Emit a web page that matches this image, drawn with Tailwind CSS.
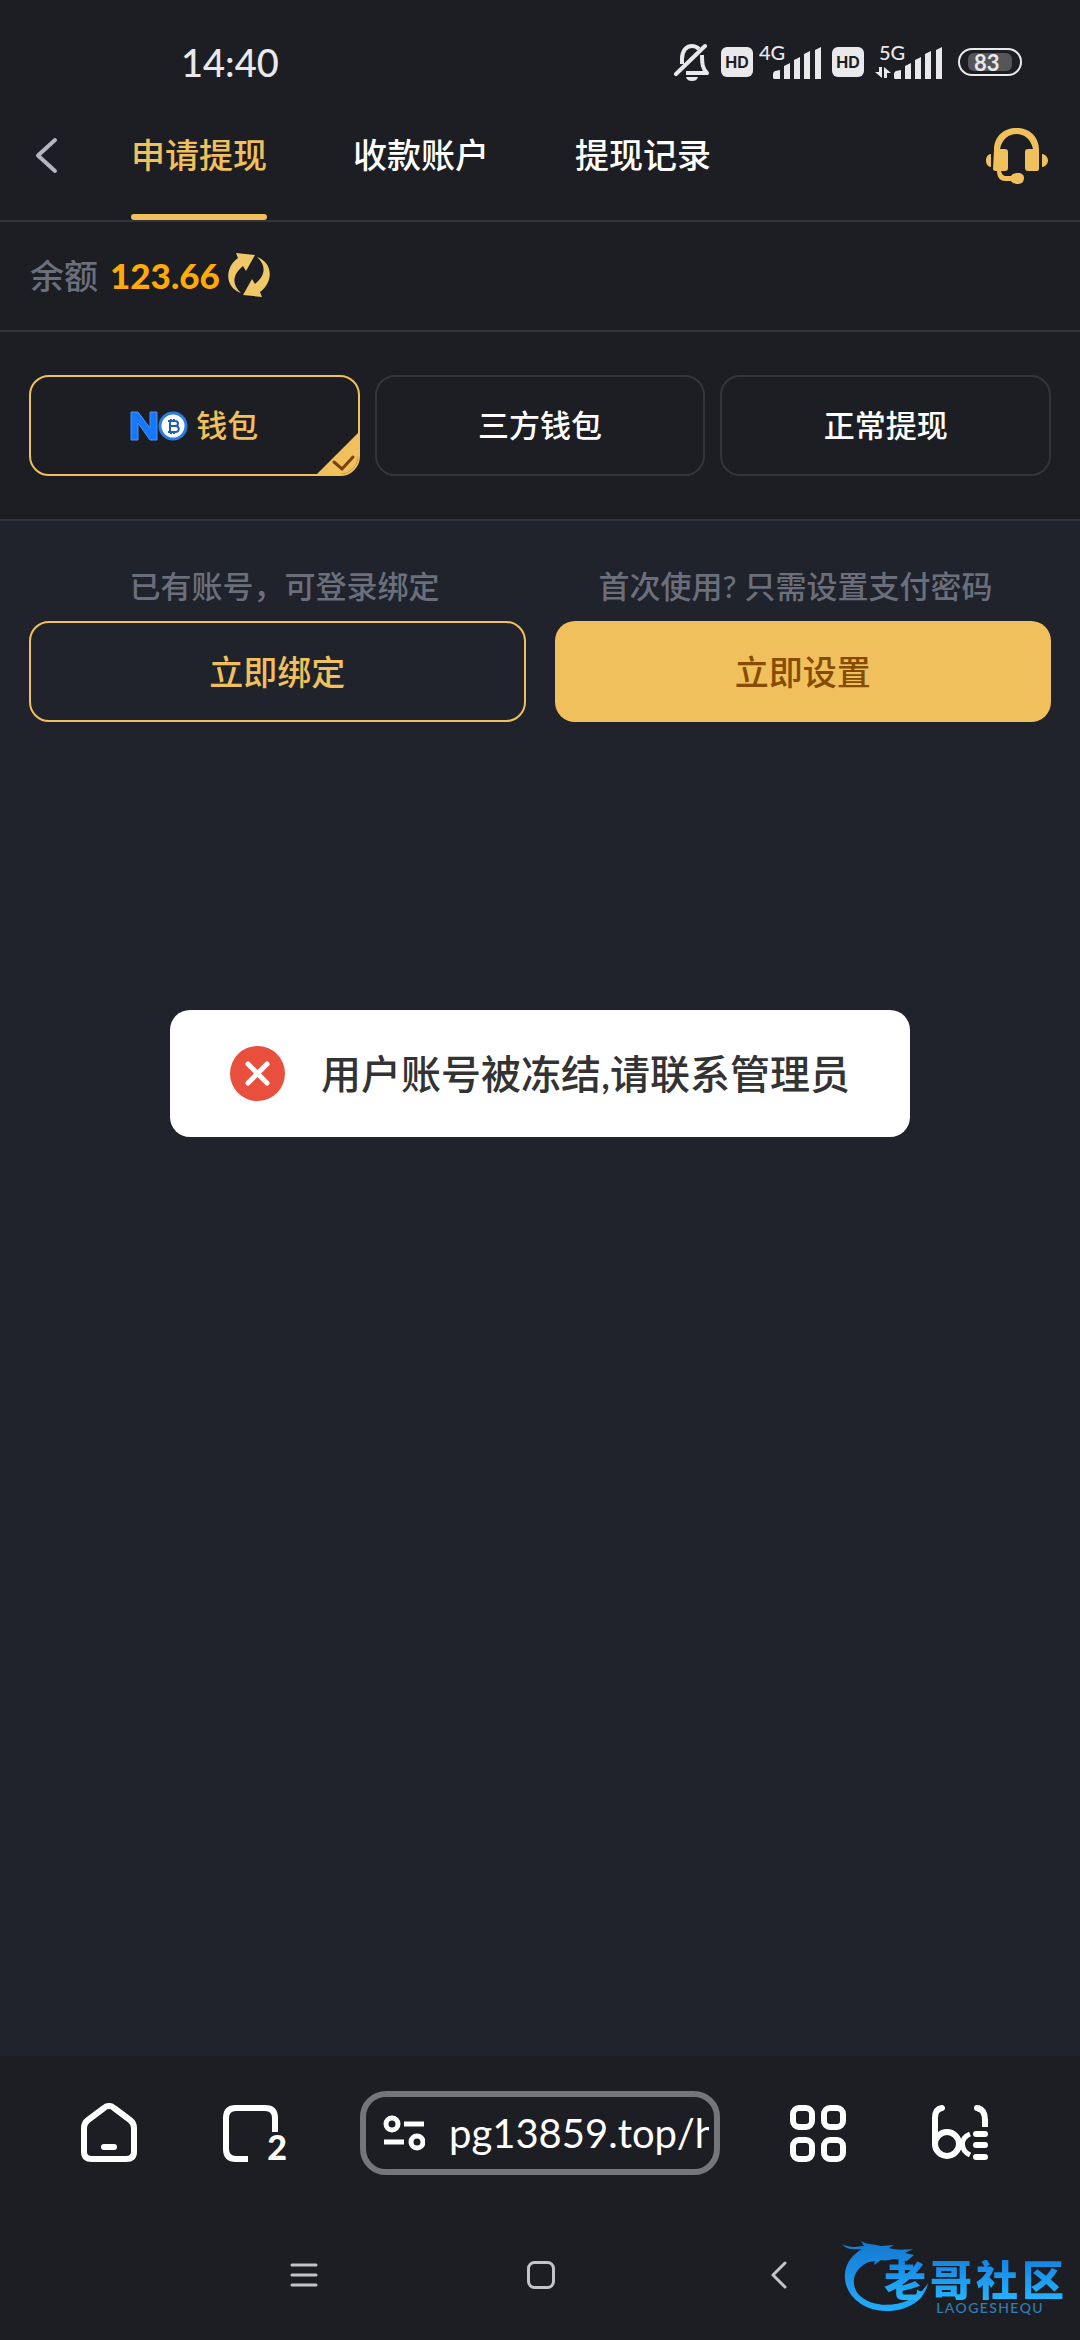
<!DOCTYPE html>
<html lang="zh-CN">
<head>
<meta charset="utf-8">
<meta name="viewport" content="width=device-width, initial-scale=1">
<title>申请提现</title>
<script src="https://cdn.jsdelivr.net/npm/@tailwindcss/browser@4"></script>
</head>
<body class="flex min-h-screen flex-col bg-[#20232b] font-['Lato','Noto_Sans_CJK_SC',sans-serif] font-medium text-white">

<!-- Status bar -->
<div class="flex h-[91px] shrink-0 items-start justify-between bg-[#1d1e23] pr-[58px] pl-[181px] pt-[38px]">
  <time class="text-[38px] leading-[48px] text-[#e9e9ec]">14:40</time>
  <div class="flex h-12 items-center text-[#e9e9ec]">
    <svg class="h-10 w-9" viewBox="0 0 36 40" fill="none" stroke="currentColor" stroke-width="4" role="img" aria-label="静音">
      <path d="M8 22V17C8 9 12 4 18 4c3 0 5 1 7 3M28 13c0 10 1 14 5 18H12" stroke-linejoin="round"/>
      <path d="M2 32 31 4" stroke-linecap="round"/>
      <path d="M12 35h12c-1 3-3 4-6 4s-5-1-6-4Z" fill="currentColor" stroke="none"/>
    </svg>
    <span class="ml-[11px] flex h-[30px] w-8 items-center justify-center rounded-md bg-[#e9e9ec] font-['Inter'] text-base font-bold text-[#1d1e23]">HD</span>
    <div class="relative ml-5 h-9 w-12">
      <span class="absolute -top-1 -left-3.5 text-xl leading-6">4G</span>
      <svg class="h-9 w-12" viewBox="0 0 48 36" fill="currentColor"><path d="M0 34v-4q0-2 2-3l5-1v9H1zM11 22l6-3v16h-6zM21 16l6-3v22h-6zM31 10l6-3v28h-6zM42 6l6-3v32h-6z"/></svg>
    </div>
    <span class="ml-[11px] flex h-[30px] w-8 items-center justify-center rounded-md bg-[#e9e9ec] font-['Inter'] text-base font-bold text-[#1d1e23]">HD</span>
    <div class="relative ml-[11px] h-9 w-[67px]">
      <span class="absolute -top-1 left-1 text-xl leading-6">5G</span>
      <svg class="h-9 w-[67px]" viewBox="0 0 67 36" fill="currentColor"><path d="M19 34v-4q0-2 2-3l5-1v9h-6zM30 22l6-3v16h-6zM40 16l6-3v22h-6zM50 10l6-3v28h-6zM61 6l6-3v32h-6z"/><path d="M4 23h3v11L0 28h4zM9 34V23l7 6h-4v5z"/></svg>
    </div>
    <span class="ml-4 flex h-7 w-16 items-center justify-center rounded-full border-2 border-[#e9e9ec]"><span class="flex h-[18px] w-11 items-center rounded-md bg-[#55565a] pl-1.5 text-[22px] font-bold">83</span></span>
  </div>
</div>

<div class="relative flex flex-1 flex-col">
  <header class="flex h-[131px] items-stretch border-b-2 border-[#34353b] bg-[#1d1e23] pr-[31px] pl-8">
    <button type="button" aria-label="返回" class="mr-[69px] text-[#b4b6c0]">
      <svg class="h-10 w-[30px]" viewBox="0 0 30 40" fill="none" stroke="currentColor" stroke-width="4" stroke-linecap="round" stroke-linejoin="round"><path d="M23 4 6 19.500 23 35"/></svg>
    </button>
    <nav class="flex gap-[86px] text-[34px]">
      <a href="#" aria-current="page" class="relative flex items-center pb-0.5 text-[#efc05b]">申请提现<span class="absolute inset-x-0 bottom-0 h-1.5 rounded-full bg-[#efc05b]"></span></a>
      <a href="#" class="flex items-center pb-0.5">收款账户</a>
      <a href="#" class="flex items-center pb-0.5">提现记录</a>
    </nav>
    <button type="button" aria-label="客服" class="ml-auto text-[#efc05b]">
      <svg class="h-14 w-16" viewBox="0 0 64 56" fill="currentColor">
        <path d="M9 22C9 8 19 0 31.500 0S54 8 54 22v19q0 2-2 2H43q-3 0-3-3V24q0-3 3-3h5C46 11 39 6 31.500 6S17 11 15 21h5q3 0 3 3v16q0 3-3 3h-4c1 4 3 5 5 5h5c2-3 5-3 7-3 4 0 6 2 6 5s-2 6-6 6c-2 0-5 0-7-3h-6c-5 0-8-4-8-10q-4 0-4-2z"/>
        <path d="M6 26v13C3 39 1 36 1 32.500S3 26 6 26ZM57 26v13c3 0 6-3 6-6.500S60 26 57 26Z"/>
      </svg>
    </button>
  </header>

  <section class="flex h-[110px] items-center border-b-2 border-[#34353b] bg-[#1d1e23] px-[30px] pb-0.5">
    <span class="text-[34px] text-[#6b6f7b]">余额</span>
    <strong class="ml-3 text-[35px] font-black text-[#ffaa09]">123.66</strong>
    <button type="button" aria-label="刷新余额" class="ml-2 text-[#efc868]">
      <svg class="h-11 w-[42px]" viewBox="0 0 42 44" fill="currentColor">
        <path id="arrow" d="M8 0 27 2 18 18 15 13C5 21 3 31 13 40-4 34-3 14 10 5Z"/>
        <use href="#arrow" transform="rotate(180 21 22)"/>
      </svg>
    </button>
  </section>

  <section class="border-b-2 border-[#2d343d] bg-[#1d1e23] px-[29px] pt-[43px] pb-[43px]">
    <div class="grid grid-cols-3 gap-[15px] text-[31px]">
      <button type="button" aria-pressed="true" class="relative flex h-[101px] items-center justify-center gap-2 overflow-hidden rounded-[20px] border-2 border-[#efc05b] text-[#efc05b]">
        <span class="flex items-center" role="img" aria-label="NO">
          <svg class="h-[30px] w-[58px]" viewBox="0 0 58 30">
            <path d="M1 29V1h7l12 16V1h7v28h-7L8 12v17z" fill="#1677ff" stroke="#4d93ee"/>
            <circle cx="43" cy="15" r="14.500" fill="#2a7de1"/><circle cx="43" cy="15" r="11.500" fill="#fff"/>
            <path d="M38 10h7c4 0 4 5 0 5h-5 5c5 0 5 6 0 6h-7m2-11v11m1-13v2m3-2v2m-3 11v2m3-2v2" fill="none" stroke="#1f5fae" stroke-width="2"/>
          </svg>
        </span>
        钱包
        <svg class="absolute -right-px -bottom-px size-[43px]" viewBox="0 0 43 43"><path d="M43 0v43H0z" fill="#efc05b"/><path d="m18 30 8 7 11-12" fill="none" stroke="#7a4106" stroke-width="3" stroke-linecap="round"/></svg>
      </button>
      <button type="button" aria-pressed="false" class="h-[101px] rounded-[20px] border-2 border-[#34353b]">三方钱包</button>
      <button type="button" aria-pressed="false" class="h-[101px] rounded-[20px] border-2 border-[#34353b]">正常提现</button>
    </div>
  </section>

  <main class="px-[29px] pt-[41px] text-center">
    <div class="grid grid-cols-2 text-[31px] leading-[48px] text-[#6b6f7b]">
      <p id="bind-hint">已有账号，可登录绑定</p>
      <p id="setup-hint">首次使用? 只需设置支付密码</p>
    </div>
    <div class="mt-[11px] grid grid-cols-2 gap-[29px] text-[34px]">
      <button type="button" aria-describedby="bind-hint" class="h-[101px] rounded-[20px] border-2 border-[#efc05b] text-[#efc05b]">立即绑定</button>
      <button type="button" aria-describedby="setup-hint" class="h-[101px] rounded-[20px] bg-[#efc05b] text-[#874b02]">立即设置</button>
    </div>
  </main>

  <!-- Toast -->
  <div class="pointer-events-none absolute inset-0 flex items-center justify-center">
    <div role="alert" class="flex h-[127px] items-center gap-9 rounded-[20px] bg-white px-[60px] text-[40px] text-[#333]">
      <svg class="size-[55px]" viewBox="0 0 55 55"><circle cx="27.500" cy="27.500" r="27.500" fill="#e94f3d"/><path d="m18 18 19 19m0-19L18 37" stroke="#fff" stroke-width="5" stroke-linecap="round"/></svg>
      用户账号被冻结,请联系管理员
    </div>
  </div>
</div>

<!-- Browser toolbar -->
<div class="flex h-[154px] shrink-0 items-center bg-[#1d1e23] pr-[92px] pl-[81px]">
  <button type="button" aria-label="主页">
    <svg class="h-[60px] w-14" viewBox="0 0 56 60" fill="none" stroke="#fff" stroke-width="6" stroke-linejoin="round" stroke-linecap="round"><path d="M3 25q0-5 4-8L23 5q5-4 10 0l16 12q4 3 4 8v24q0 7-8 7H11q-8 0-8-7zM23 44h10"/></svg>
  </button>
  <button type="button" aria-label="标签页 2" class="relative ml-[86px]">
    <svg class="h-[60px] w-[62px]" viewBox="0 0 62 60" fill="none" stroke="#fff" stroke-width="6"><path d="M25 56H13q-10 0-10-10V15Q3 5 13 5h29q10 0 10 10v14"/></svg>
    <span class="absolute -right-0.5 bottom-0 text-[34px] leading-[32px] font-black">2</span>
  </button>
  <div class="mr-[70px] ml-[75px] flex h-[84px] min-w-0 flex-1 items-center rounded-[26px] border-6 border-[#75767a] pr-[5px] pl-[17px]">
    <svg class="h-9 w-[42px] shrink-0" viewBox="0 0 42 36" fill="none" stroke="#fff" stroke-width="5"><circle cx="9" cy="9" r="6"/><path d="M21 9h20M1 27h20"/><circle cx="34" cy="27" r="6"/></svg>
    <input type="text" aria-label="网址" value="pg13859.top/h" class="ml-6 min-w-0 flex-1 bg-transparent text-[40px] font-normal outline-none">
  </div>
  <button type="button" aria-label="应用">
    <svg class="h-[60px] w-14" viewBox="0 0 56 60" fill="none" stroke="#fff" stroke-width="6"><rect x="3" y="5" width="19" height="19" rx="6"/><rect x="34" y="5" width="19" height="19" rx="6"/><rect x="3" y="37" width="19" height="19" rx="6"/><rect x="34" y="37" width="19" height="19" rx="6"/></svg>
  </button>
  <button type="button" aria-label="阅读" class="ml-[86px]">
    <svg class="h-[60px] w-14" viewBox="0 0 56 60" fill="none" stroke="#fff" stroke-width="6" stroke-linecap="round"><path d="M10 5q-7 1-7 10v26"/><circle cx="15" cy="41" r="12"/><path d="M38 31c-10 4-10 16 0 21" stroke-linecap="butt" stroke-width="5"/><path d="M46 5q7 2 7 12v7" stroke-linecap="butt"/><path d="M45 5q1 0 2 1M44 31h9M44 42h9M44 54h9"/></svg>
  </button>
</div>

<!-- System navigation -->
<div class="relative flex h-[130px] shrink-0 items-center justify-center gap-[209px] bg-[#1d1e23] pl-0.5 text-[#c4c4c7]">
  <button type="button" aria-label="最近任务"><svg class="size-7" viewBox="0 0 28 28" stroke="currentColor" stroke-width="3" stroke-linecap="round"><path d="M2 4h24M2 14h24M2 24h24"/></svg></button>
  <button type="button" aria-label="桌面"><svg class="size-7" viewBox="0 0 28 28" fill="none" stroke="currentColor" stroke-width="3"><rect x="1.500" y="1.500" width="25" height="25" rx="6"/></svg></button>
  <button type="button" aria-label="返回"><svg class="size-7" viewBox="0 0 28 28" fill="none" stroke="currentColor" stroke-width="3" stroke-linecap="round" stroke-linejoin="round"><path d="M21 2 9 14l12 12"/></svg></button>
  <div class="absolute right-4 bottom-6 h-20 w-[224px]">
    <svg class="absolute inset-0 h-20 w-[224px]" viewBox="0 0 224 80" aria-hidden="true">
      <defs><linearGradient id="sea" x1="0" y1="0" x2="0" y2="1"><stop offset="0" stop-color="#1478cf"/><stop offset="1" stop-color="#21adff"/></linearGradient></defs>
      <path fill="url(#sea)" d="M2 8c8 4 14 3 22 2l-3-5c6 4 14 3 20 5l13-1-5 3c7 2 13 2 24 1l-8 4 9 2-7 6-13-2c-5 1-9 2-13 1l-7 5 1-4-6 1C10 33 7 57 30 66c19 7 46 1 58-19-3 17-20 28-41 28C17 75 0 52 6 32 9 23 15 17 22 13 12 14 6 13 2 8Z"/>
    </svg>
    <div class="absolute top-6 right-0 flex gap-1 bg-linear-to-b from-[#1684e0] to-[#25b4ff] bg-clip-text text-[42px] leading-[40px] font-black text-transparent"><span>老</span><span>哥</span><span>社</span><span>区</span></div>
    <div class="absolute right-5 bottom-0 text-sm leading-4 tracking-widest text-[#2f7fb5]">LAOGESHEQU</div>
  </div>
</div>
</body>
</html>
